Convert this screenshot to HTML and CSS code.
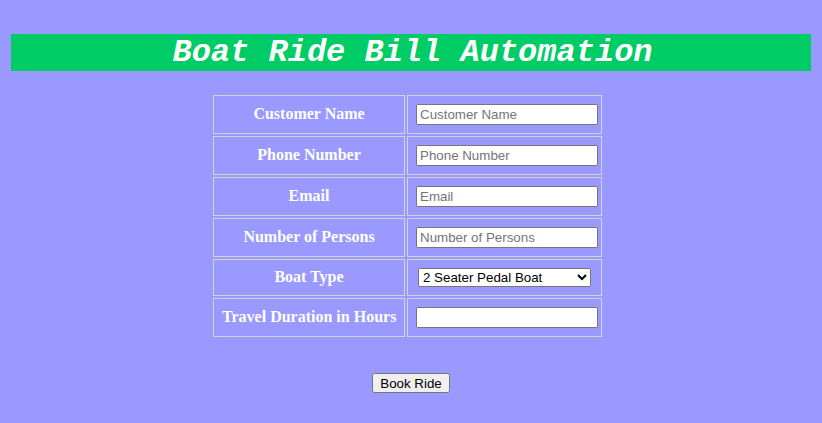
FILE: index.html
```html
<!DOCTYPE html>
<html lang="en">
<head>
<meta charset="utf-8">
<title>Boat Ride Bill Automation</title>
<link rel="stylesheet" href="styles.css">
</head>
<body>
<div class="page">
  <h1 class="title">Boat Ride Bill Automation</h1>
  <form class="form">
    <table class="grid">
      <tr>
        <td class="label">Customer Name</td>
        <td class="field"><input class="box" type="text" placeholder="Customer Name"></td>
      </tr>
      <tr>
        <td class="label">Phone Number</td>
        <td class="field"><input class="box" type="text" placeholder="Phone Number"></td>
      </tr>
      <tr>
        <td class="label">Email</td>
        <td class="field"><input class="box" type="text" placeholder="Email"></td>
      </tr>
      <tr>
        <td class="label">Number of Persons</td>
        <td class="field"><input class="box" type="text" placeholder="Number of Persons"></td>
      </tr>
      <tr>
        <td class="label">Boat Type</td>
        <td class="field">
          <select class="pick">
            <option>2 Seater Pedal Boat</option>
            <option>4 Seater Pedal Boat</option>
            <option>Motor Boat</option>
          </select>
        </td>
      </tr>
      <tr>
        <td class="label">Travel Duration in Hours</td>
        <td class="field"><input class="box" type="text"></td>
      </tr>
    </table>
    <div class="actions"><button class="btn" type="button">Book Ride</button></div>
  </form>
</div>
</body>
</html>
```
FILE: styles.css
```css
html, body {
  margin: 0;
  background: #9999ff;
}
body {
  font-family: "Liberation Serif", "Times New Roman", serif;
  min-height: 423px;
}
.page {
  padding: 34px 11px 0;
}
.title {
  margin: 0;
  padding-left: 3px;
  background: #00cc66;
  color: #ffffff;
  font: italic bold 32px/37px "Liberation Mono", "Courier New", monospace;
  text-align: center;
}
.form {
  margin: 0;
}
.grid {
  margin: 22px 0 0 200px;
  border-spacing: 2px;
  table-layout: fixed;
  width: 393px;
}
.label {
  width: 174px;
  padding: 7px 8px 9px;
  border: 1px solid #d3d3d3;
  color: #ffffff;
  font-weight: bold;
  font-size: 16px;
  text-align: center;
  vertical-align: middle;
  white-space: nowrap;
}
.field {
  width: 177px;
  padding: 8px;
  border: 1px solid #d3d3d3;
  vertical-align: middle;
}
.box {
  display: block;
  margin: 0;
  width: 182px;
  height: 21px;
  box-sizing: border-box;
  font: 13.33px "Liberation Sans", Arial, sans-serif;
}
.pick {
  display: block;
  margin: 0 auto;
  width: 173px;
  height: 19px;
  box-sizing: border-box;
  font: 13.33px "Liberation Sans", Arial, sans-serif;
}
.actions {
  margin-top: 34px;
  text-align: center;
}
.btn {
  font: 13.33px "Liberation Sans", Arial, sans-serif;
  height: 20px;
  padding: 1px 6px;
  white-space: nowrap;
}
```
